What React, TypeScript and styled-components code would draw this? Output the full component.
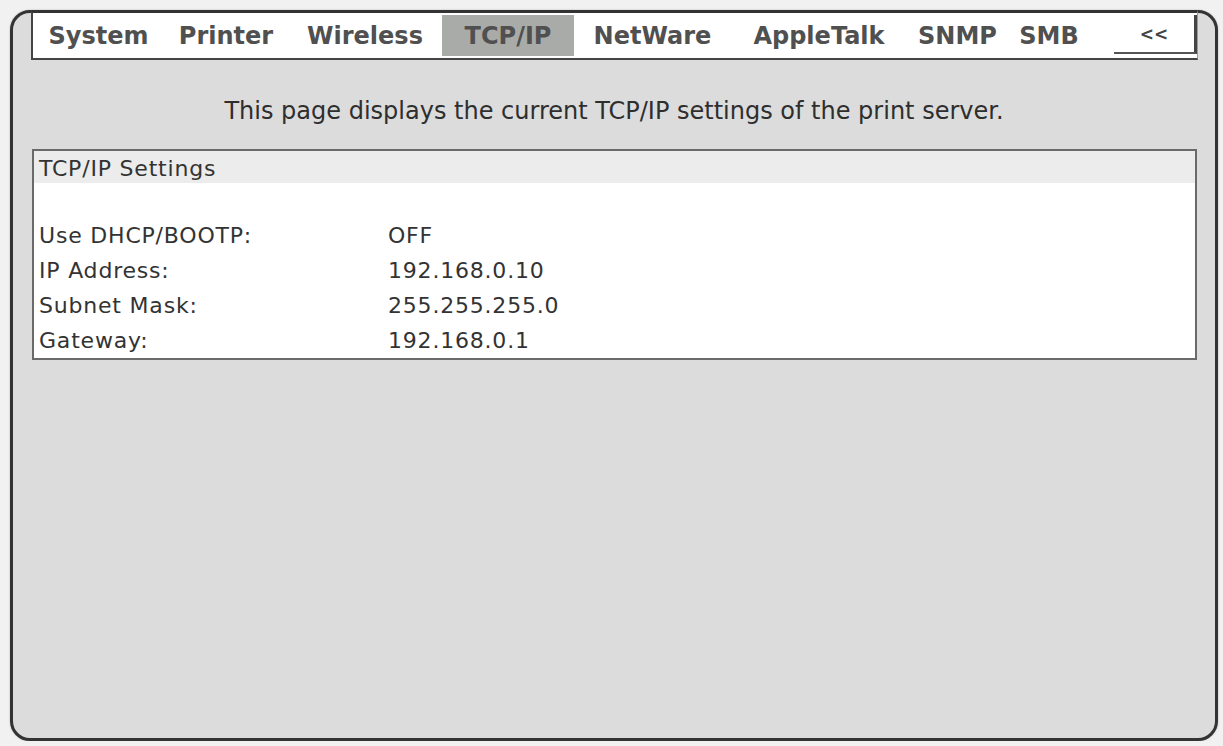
import styled, { createGlobalStyle } from "styled-components";

const GlobalStyle = createGlobalStyle`
  html, body {
    margin: 0;
    background: #f1f1f1;
  }
  body {
    font-family: "DejaVu Sans", Verdana, sans-serif;
  }
`

// tab cells keep fixed widths, like the table cells of the old admin page
const tabs: { label: string; width: number }[] = [
  { label: "System", width: 131 },
  { label: "Printer", width: 124 },
  { label: "Wireless", width: 154 },
  { label: "TCP/IP", width: 132 },
  { label: "NetWare", width: 157 },
  { label: "AppleTalk", width: 176 },
  { label: "SNMP", width: 101 },
  { label: "SMB", width: 82 },
]

const settings: [string, string][] = [
  ["Use DHCP/BOOTP:", "OFF"],
  ["IP Address:", "192.168.0.10"],
  ["Subnet Mask:", "255.255.255.0"],
  ["Gateway:", "192.168.0.1"],
]

export default function App() {
  return (
    <>
      <GlobalStyle />
      <Frame>
        <TabStrip>
          {tabs.map(tab => (
            <Tab key={tab.label} $width={tab.width} $active={tab.label === "TCP/IP"}>
              {tab.label}
            </Tab>
          ))}
          <CollapseButton>&lt;&lt;</CollapseButton>
        </TabStrip>
        <Intro>This page displays the current TCP/IP settings of the print server.</Intro>
        <SettingsBox>
          <SettingsHeader>TCP/IP Settings</SettingsHeader>
          <SettingsGrid>
            {settings.map(([label, value]) => (
              <SettingsRow key={label}>
                <span>{label}</span>
                <span>{value}</span>
              </SettingsRow>
            ))}
          </SettingsGrid>
        </SettingsBox>
      </Frame>
    </>
  )
}

const Frame = styled.div`
  box-sizing: border-box;
  margin: 10px 0 0 10px;
  width: 1208px;
  height: 731px;
  border: 3px solid #333;
  border-radius: 20px;
  background: #dcdcdc;
  box-shadow: 0 0 2px rgba(0, 0, 0, 0.25);
  display: flex;
  flex-direction: column;
`

const TabStrip = styled.div`
  box-sizing: border-box;
  margin: -3px 17px 0 18px;
  height: 50px;
  padding: 2px 0;
  display: flex;
  align-items: stretch;
  background: #fff;
  border-top: 3px solid #333;
  border-left: 2px solid #444;
  border-bottom: 2px solid #444;
  border-right: 1px solid #999;
`

const Tab = styled.div<{ $active?: boolean; $width: number }>`
  flex: 0 0 ${props => props.$width}px;
  display: flex;
  align-items: center;
  justify-content: center;
  font-size: 24px;
  font-weight: bold;
  color: #505050;
  background: ${props => props.$active ? '#a9aba8' : 'transparent'};
`

const CollapseButton = styled.div`
  margin-left: auto;
  width: 80px;
  margin-bottom: 2px;
  display: flex;
  align-items: center;
  justify-content: center;
  font-size: 17px;
  font-weight: bold;
  color: #444;
  border-right: 3px solid #444;
  border-bottom: 2px solid #555;
`

const Intro = styled.p`
  margin: 37px 0 0;
  text-align: center;
  font-size: 24px;
  line-height: 28px;
  color: #2e2e2e;
`

const SettingsBox = styled.div`
  margin: 24px 18px 0 19px;
  border: 2px solid #6a6a6a;
  background: #fff;
`

const SettingsHeader = styled.div`
  box-sizing: border-box;
  height: 32px;
  padding: 4px 0 0 5px;
  line-height: 28px;
  background: #ececec;
  font-size: 22px;
  letter-spacing: 0.8px;
  color: #333;
`

const SettingsGrid = styled.div`
  padding-top: 35px;
`

const SettingsRow = styled.div`
  display: grid;
  grid-template-columns: 349px 1fr;
  height: 35px;
  align-items: center;
  padding-left: 5px;
  font-size: 22px;
  letter-spacing: 0.8px;
  color: #333;
`
